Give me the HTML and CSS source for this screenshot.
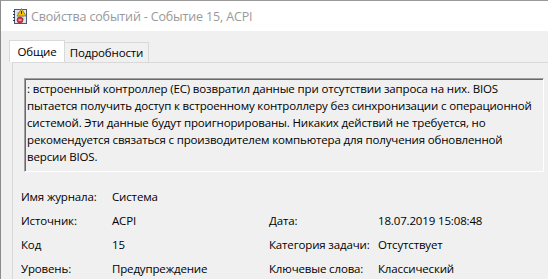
FILE: index.html
```html
<!DOCTYPE html>
<html lang="ru">
<head>
  <meta charset="UTF-8" />
  <title>Свойства событий - Событие 15, ACPI</title>
  <link rel="stylesheet" href="styles.css">
</head>
<body>
  <div class="window">
    <div class="titlebar">
      <svg class="app-icon" width="16" height="16" viewBox="0 0 16 16">
        <rect x="2.5" y="1.5" width="12" height="14" fill="#dfe6f2" stroke="#4a5a78"/>
        <line x1="5" y1="5" x2="12" y2="5" stroke="#8a9ab8"/>
        <line x1="5" y1="8" x2="12" y2="8" stroke="#8a9ab8"/>
        <line x1="5" y1="11" x2="12" y2="11" stroke="#8a9ab8"/>
        <rect x="1" y="3" width="2" height="1" fill="#333"/>
        <rect x="1" y="6" width="2" height="1" fill="#333"/>
        <rect x="1" y="9" width="2" height="1" fill="#333"/>
        <rect x="1" y="12" width="2" height="1" fill="#333"/>
        <polygon points="9.5,0.5 14,8 5,8" fill="#f5c400" stroke="#8a6d00" stroke-width="0.7"/>
        <rect x="9.1" y="3" width="0.9" height="3" fill="#222"/>
        <circle cx="8" cy="12" r="3" fill="#d8333a" stroke="#8c1d22" stroke-width="0.6"/>
        <rect x="6.5" y="11.5" width="3" height="1" fill="#fff"/>
      </svg>
      <span class="title">Свойства событий - Событие 15, ACPI</span>
    </div>

    <div class="dialog">
      <div class="tabs">
        <div class="tab active">Общие</div>
        <div class="tab">Подробности</div>
      </div>

      <div class="panel">
        <div class="description">: встроенный контроллер (EC) возвратил данные при отсутствии запроса на них. BIOS<br>пытается получить доступ к встроенному контроллеру без синхронизации с операционной<br>системой. Эти данные будут проигнорированы. Никаких действий не требуется, но<br>рекомендуется связаться с производителем компьютера для получения обновленной<br>версии BIOS.</div>

        <div class="fields">
          <div class="label">Имя журнала:</div>
          <div class="value">Система</div>
          <div></div>
          <div></div>

          <div class="label">Источник:</div>
          <div class="value">ACPI</div>
          <div class="label">Дата:</div>
          <div class="value">18.07.2019 15:08:48</div>

          <div class="label">Код</div>
          <div class="value">15</div>
          <div class="label">Категория задачи:</div>
          <div class="value">Отсутствует</div>

          <div class="label">Уровень:</div>
          <div class="value">Предупреждение</div>
          <div class="label">Ключевые слова:</div>
          <div class="value">Классический</div>
        </div>
      </div>
    </div>
  </div>
</body>
</html>
```

FILE: styles.css
```css
body {
  margin: 0;
  padding: 0;
  width: 548px;
  height: 279px;
  overflow: hidden;
  font-family: 'Segoe UI', 'Open Sans', sans-serif;
  font-size: 11.5px;
  letter-spacing: -0.15px;
  color: #000;
  background-color: #f0f0f0;
}

.window {
  height: 279px;
  border-top: 1px solid #9a9a9a;
  border-left: 1px solid #8c8c8c;
  box-sizing: border-box;
  background-color: #f0f0f0;
}

.titlebar {
  height: 30px;
  display: flex;
  align-items: center;
  padding-left: 11px;
  background-color: #fff;
}

.app-icon {
  flex: none;
}

.title {
  margin-left: 3px;
  font-size: 12.5px;
  letter-spacing: -0.15px;
  color: #999;
}

.dialog {
  padding-top: 9px;
}

.tabs {
  display: flex;
  align-items: flex-end;
  padding-left: 8px;
  height: 22px;
}

.tab {
  box-sizing: border-box;
  width: 84px;
  height: 20px;
  line-height: 19px;
  text-align: center;
  border: 1px solid #d9d9d9;
  border-bottom: none;
  background-color: #f0f0f0;
}

.tab.active {
  width: 56px;
  height: 22px;
  line-height: 21px;
  background-color: #fff;
  position: relative;
  z-index: 1;
}

.tab.active + .tab {
  border-left: none;
}

.panel {
  margin-left: 11px;
  border-top: 1px solid #d9d9d9;
  border-left: 1px solid #d9d9d9;
  padding: 15px 0 0 11px;
}

.description {
  width: 514px;
  height: 89px;
  padding: 1px 2px 2px 2px;
  border-top: 1px solid #a0a0a0;
  border-left: 1px solid #a0a0a0;
  border-right: 1px solid #fff;
  border-bottom: 1px solid #fff;
  box-shadow: inset 1px 1px 0 #696969;
  line-height: 17px;
  white-space: nowrap;
}

.fields {
  display: grid;
  grid-template-columns: 91px 157px 109px auto;
  grid-auto-rows: 24px;
  margin: 13px 0 0 -3px;
  line-height: 24px;
}
```
